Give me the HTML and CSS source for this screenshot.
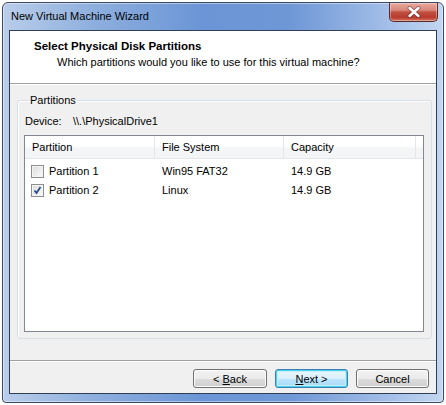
FILE: index.html
```html
<!DOCTYPE html>
<html>
<head>
<meta charset="utf-8">
<link rel="stylesheet" href="styles.css">
</head>
<body>
<div class="window">
  <div class="titlebar">
    <span class="title">New Virtual Machine Wizard</span>
    <div class="close">
      <svg width="16" height="12" viewBox="0 0 16 12">
        <path d="M3.5 2 L12.5 10 M12.5 2 L3.5 10" stroke="#4a2020" stroke-width="4" stroke-linecap="round" fill="none" opacity="0.5"/>
        <path d="M3.5 2 L12.5 10 M12.5 2 L3.5 10" stroke="#ffffff" stroke-width="2.4" stroke-linecap="round" fill="none"/>
      </svg>
    </div>
  </div>
  <div class="client">
    <div class="header">
      <div class="h-title">Select Physical Disk Partitions</div>
      <div class="h-sub">Which partitions would you like to use for this virtual machine?</div>
    </div>
    <div class="body">
      <fieldset class="group">
        <legend>Partitions</legend>
        <div class="device"><span class="dev-label">Device:</span><span>\\.\PhysicalDrive1</span></div>
        <div class="list">
          <div class="list-head">
            <div class="col c1">Partition</div>
            <div class="col c2">File System</div>
            <div class="col c3">Capacity</div>
            <div class="col c4"></div>
          </div>
          <div class="row">
            <div class="col c1"><span class="check"></span>Partition 1</div>
            <div class="col c2">Win95 FAT32</div>
            <div class="col c3">14.9 GB</div>
          </div>
          <div class="row">
            <div class="col c1"><span class="check on"><svg width="9" height="9" viewBox="0 0 9 9"><path d="M1.5 4.5 L3.5 7 L7.5 1" stroke="#2a4a8a" stroke-width="1.8" fill="none"/></svg></span>Partition 2</div>
            <div class="col c2">Linux</div>
            <div class="col c3">14.9 GB</div>
          </div>
        </div>
      </fieldset>
    </div>
    <div class="footer">
      <button class="btn">&lt; <u>B</u>ack</button>
      <button class="btn default"><u>N</u>ext &gt;</button>
      <button class="btn">Cancel</button>
    </div>
  </div>
</div>
</body>
</html>
```
FILE: styles.css
```css
* { box-sizing: border-box; }
html, body { margin: 0; padding: 0; background: #ffffff; }
body { padding: 2px; font-family: "Liberation Sans", Arial, sans-serif; font-size: 11px; color: #000; }

.window {
  width: 442px;
  height: 401px;
  border: 1px solid #3b4a62;
  border-radius: 6px 6px 4px 4px;
  padding: 0 6px 8px 6px;
  display: flex;
  flex-direction: column;
  background: linear-gradient(90deg, #b9cdea 0%, #8fb0de 20%, #6b95d6 45%, #6e97d6 65%, #a9c3ea 90%, #c3d6f1 100%);
  box-shadow: inset 0 0 0 1px rgba(255,255,255,0.45);
  overflow: hidden;
}

.titlebar {
  height: 27px;
  display: flex;
  align-items: flex-start;
  justify-content: space-between;
  flex: none;
}
.title {
  font-size: 11px;
  margin-top: 7px;
  margin-left: 2px;
  color: #000;
}
.close {
  width: 49px;
  height: 19px;
  margin-right: -1px;
  border: 1px solid #5b2a26;
  border-top: none;
  border-radius: 0 0 5px 5px;
  background: linear-gradient(180deg, #e9a99d 0%, #d8877a 40%, #c24f40 50%, #b83a2e 80%, #d57a60 100%);
  display: flex;
  align-items: center;
  justify-content: center;
  box-shadow: inset 0 0 0 1px rgba(255,255,255,0.35);
}

.client {
  flex: 1;
  border: 1px solid #2f3d55;
  background: #f0f0f0;
  display: flex;
  flex-direction: column;
}

.header {
  height: 53px;
  background: #ffffff;
  border-bottom: 1px solid #a0a0a0;
  padding: 8px 0 0 24px;
  flex: none;
}
.h-title { font-weight: bold; line-height: 15px; font-size: 11.5px; }
.h-sub { line-height: 16px; padding-left: 23px; }

.body {
  flex: 1;
  padding: 9px 8px 0 7px;
  box-shadow: inset 0 1px 0 #ffffff;
}

.group {
  margin: 0;
  border: 1px solid #d5dfe5;
  border-radius: 3px;
  padding: 2px 7px 6px 6px;
  height: 246px;
  display: flex;
  flex-direction: column;
  box-shadow: inset 1px 1px 0 #fff;
}
.group legend {
  padding: 0 1px;
  margin-left: 5px;
  line-height: 15px;
}
.device {
  display: flex;
  line-height: 15px;
  padding-left: 1px;
  margin-top: 4px;
  margin-bottom: 6px;
}
.dev-label { width: 48px; }

.list {
  flex: 1;
  border: 1px solid #828790;
  background: #ffffff;
}
.list-head {
  display: flex;
  height: 23px;
  background: linear-gradient(180deg, #ffffff 0%, #ffffff 45%, #f4f5f7 55%, #f4f5f7 100%);
  border-bottom: 1px solid #e3e6ea;
  margin-bottom: 3px;
}
.list-head .col {
  line-height: 23px;
  border-right: 1px solid #e3e6ea;
}
.col { padding-left: 7px; white-space: nowrap; }
.c1 { width: 130px; }
.c2 { width: 129px; }
.c3 { width: 132px; }
.c4 { flex: 1; border-right: none !important; }

.row {
  display: flex;
  height: 19px;
  line-height: 19px;
}
.row .c1 { display: flex; align-items: center; padding-left: 6px; }
.check {
  width: 13px;
  height: 13px;
  border: 1px solid #8e8f8f;
  background: linear-gradient(135deg, #dcdcdc 0%, #f4f4f4 80%, #fafafa 100%);
  box-shadow: inset 0 0 0 1px #f4f4f4;
  margin-right: 5px;
  display: flex;
  align-items: center;
  justify-content: center;
}
.check.on svg { display: block; }

.footer {
  height: 33px;
  border-top: 1px solid #a0a0a0;
  box-shadow: inset 0 1px 0 #ffffff;
  display: flex;
  justify-content: flex-end;
  align-items: flex-start;
  gap: 8px;
  padding: 8px 7px 0 0;
  flex: none;
}
.btn {
  width: 73px;
  height: 19px;
  padding: 0;
  font-family: "Liberation Sans", Arial, sans-serif;
  font-size: 11px;
  color: #000;
  border: 1px solid #707070;
  border-radius: 3px;
  background: linear-gradient(180deg, #f2f2f2 0%, #ebebeb 50%, #dddddd 51%, #cfcfcf 100%);
  box-shadow: inset 0 0 0 1px #fcfcfc;
}
.btn:first-child { width: 74px; }
.btn.default {
  border-color: #3c7fb1;
  background: linear-gradient(180deg, #eaf6fd 0%, #d9f0fc 50%, #bee6fd 51%, #a7d9f5 100%);
  box-shadow: inset 0 0 0 1px #48d2f0, inset 0 0 0 2px #c5eef8;
}
.btn u { text-decoration: underline; }
```
